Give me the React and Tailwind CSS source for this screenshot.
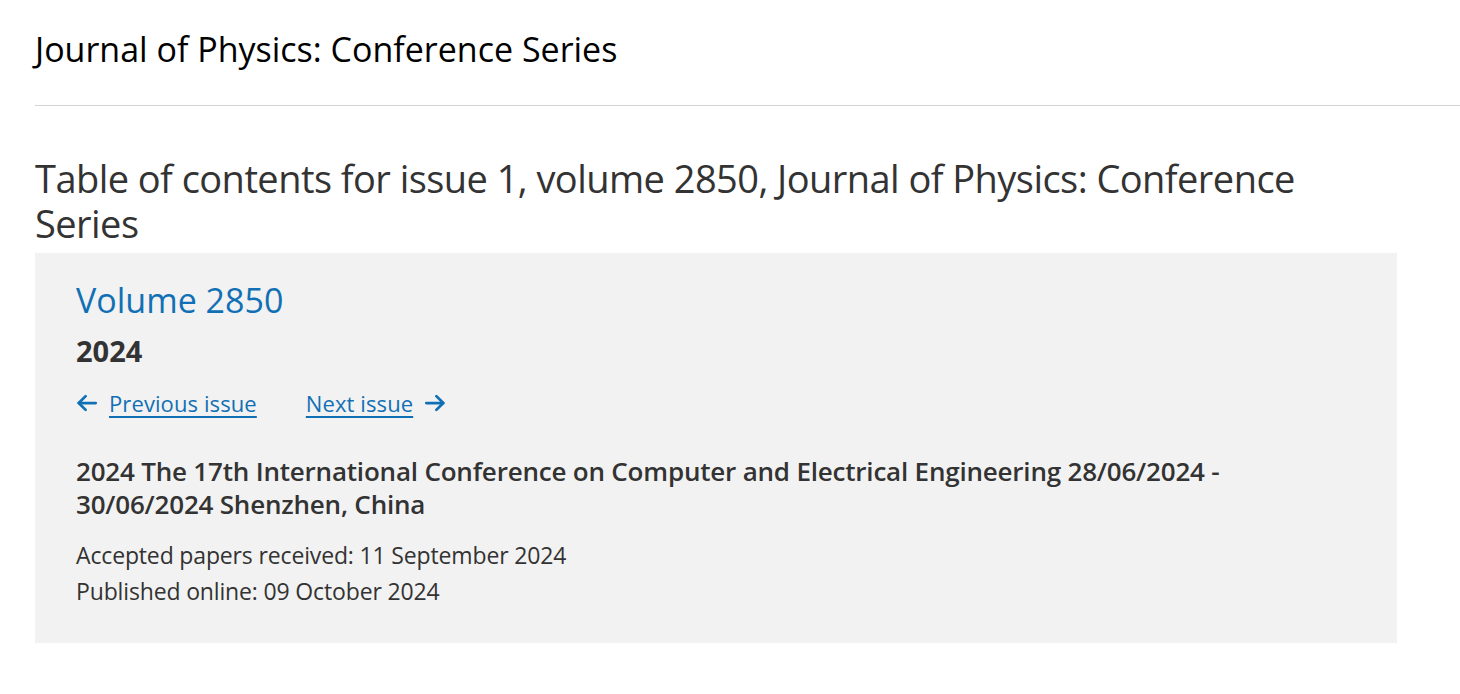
import React from "react";

const Arrow = ({ dir }) => (
  <svg width="22" height="22" viewBox="0 0 24 24" fill="none" stroke="currentColor" strokeWidth="3" strokeLinecap="round" strokeLinejoin="round">
    {dir === "left" ? (
      <>
        <path d="M21.5 12H3" />
        <path d="M10.5 4.5L3 12l7.5 7.5" />
      </>
    ) : (
      <>
        <path d="M2.5 12H21" />
        <path d="M13.5 4.5L21 12l-7.5 7.5" />
      </>
    )}
  </svg>
);

export default function App() {
  return (
    <div className="min-h-screen bg-white pl-[35px]" style={{ fontFamily: '"Open Sans", "Noto Sans", sans-serif' }}>
      <header className="pt-[29px] pb-[36px] border-b border-[#d4d4d4]">
        <h1 className="text-[34px] leading-[40px] text-black">Journal of Physics: Conference Series</h1>
      </header>
      <main className="w-[1362px] pt-[50px]">
        <h2 className="text-[38px] leading-[45px] text-[#333] tracking-[-0.55px]">
          Table of contents for issue 1, volume 2850, Journal of Physics: Conference Series
        </h2>
        <section className="bg-[#f2f2f2] mt-[7px] pl-[41px] pr-[40px] pt-[25px] pb-[34px]">
          <h3 className="text-[34px] leading-[44px] text-[#1170b5]">Volume 2850</h3>
          <div className="mt-[11px] text-[29px] leading-[36px] font-bold text-[#333]">2024</div>
          <nav className="mt-[19px] flex items-center gap-[49px] text-[22px] leading-[30px] text-[#1170b5] tracking-[0.1px]">
            <a href="#" className="flex items-center gap-[11px]">
              <Arrow dir="left" />
              <span className="underline underline-offset-[4px]">Previous issue</span>
            </a>
            <a href="#" className="flex items-center gap-[11px]">
              <span className="underline underline-offset-[4px]">Next issue</span>
              <Arrow dir="right" />
            </a>
          </nav>
          <h4 className="mt-[37px] w-[1190px] text-[26px] leading-[33px] font-semibold text-[#333] tracking-[-0.2px]">
            2024 The 17th International Conference on Computer and Electrical Engineering 28/06/2024 - 30/06/2024 Shenzhen, China
          </h4>
          <div className="mt-[16px] text-[23px] leading-[36px] text-[#333] tracking-[-0.15px]">
            <p>Accepted papers received: 11 September 2024</p>
            <p>Published online: 09 October 2024</p>
          </div>
        </section>
      </main>
    </div>
  );
}
